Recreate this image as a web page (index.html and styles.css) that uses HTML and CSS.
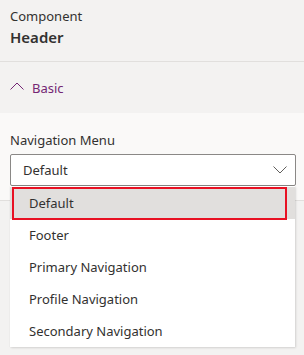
FILE: index.html
```html
<!DOCTYPE html>
<html lang="en">
<head>
    <meta charset="UTF-8">
    <meta name="viewport" content="width=device-width, initial-scale=1.0">
    <title>Component Properties</title>
    <link rel="stylesheet" href="styles.css">
</head>
<body>

    <div class="panel">
        <div class="panel-header">
            <div class="panel-kind">Component</div>
            <div class="panel-title">Header</div>
        </div>

        <div class="section-toggle">
            <svg class="toggle-icon" width="14" height="8" viewBox="0 0 14 8">
                <path d="M0.5 7.5 L7 1 L13.5 7.5" fill="none" stroke="#742774" stroke-width="1"/>
            </svg>
            <span>Basic</span>
        </div>

        <div class="props">
            <label class="field-label">Navigation Menu</label>
            <div class="dropdown">
                <div class="dropdown-box">
                    <span>Default</span>
                    <svg width="14" height="8" viewBox="0 0 14 8">
                        <path d="M0.5 0.5 L7 7 L13.5 0.5" fill="none" stroke="#605e5c" stroke-width="1"/>
                    </svg>
                </div>
                <ul class="dropdown-list">
                    <li class="option selected">Default<span class="mark"></span></li>
                    <li class="option">Footer</li>
                    <li class="option">Primary Navigation</li>
                    <li class="option">Profile Navigation</li>
                    <li class="option">Secondary Navigation</li>
                </ul>
            </div>
        </div>
    </div>

</body>
</html>
```

FILE: styles.css
```css
body {
    margin: 0;
    padding: 0;
    min-height: 355px;
    background-color: #f3f2f1;
    font-family: "Noto Sans", "Open Sans", sans-serif;
    font-size: 13px;
    color: #323130;
}
.panel {
    width: 304px;
    min-height: 355px;
}
.panel-header {
    height: 62px;
    padding: 6px 10px 0;
    box-sizing: border-box;
    border-bottom: 1px solid #e1dfdd;
}
.panel-kind {
    font-size: 13px;
    line-height: 20px;
}
.panel-title {
    font-size: 15px;
    font-weight: 600;
    line-height: 22px;
}
.section-toggle {
    height: 51px;
    display: flex;
    align-items: center;
    gap: 8px;
    padding: 0 10px;
    color: #742774;
    font-size: 13px;
}
.toggle-icon {
    margin-top: -3px;
}
.props {
    background-color: #faf9f8;
    height: 88px;
    padding: 16px 8px 0 10px;
    box-sizing: border-box;
    border-bottom: 1px solid #e1dfdd;
}
.field-label {
    display: block;
    line-height: 22px;
    margin-bottom: 3px;
}
.dropdown {
    position: relative;
}
.dropdown-box {
    height: 32px;
    box-sizing: border-box;
    border: 1px solid #8a8886;
    border-radius: 2px;
    background-color: #fff;
    display: flex;
    align-items: center;
    justify-content: space-between;
    padding: 0 8px 0 12px;
}
.dropdown-list {
    position: absolute;
    top: 32px;
    left: 0;
    width: 285px;
    margin: 0;
    padding: 1px 0 0;
    list-style: none;
    background-color: #fff;
    box-shadow: 1px 1px 2px rgba(0, 0, 0, 0.12), 0 0 1px rgba(0, 0, 0, 0.1);
    z-index: 2;
}
.option {
    position: relative;
    height: 32px;
    line-height: 32px;
    padding-left: 19px;
}
.option.selected {
    background-color: #e1dfdd;
}
.mark {
    position: absolute;
    top: 0;
    left: 2px;
    right: 8px;
    bottom: -1px;
    border: 2px solid #e81123;
}
```
